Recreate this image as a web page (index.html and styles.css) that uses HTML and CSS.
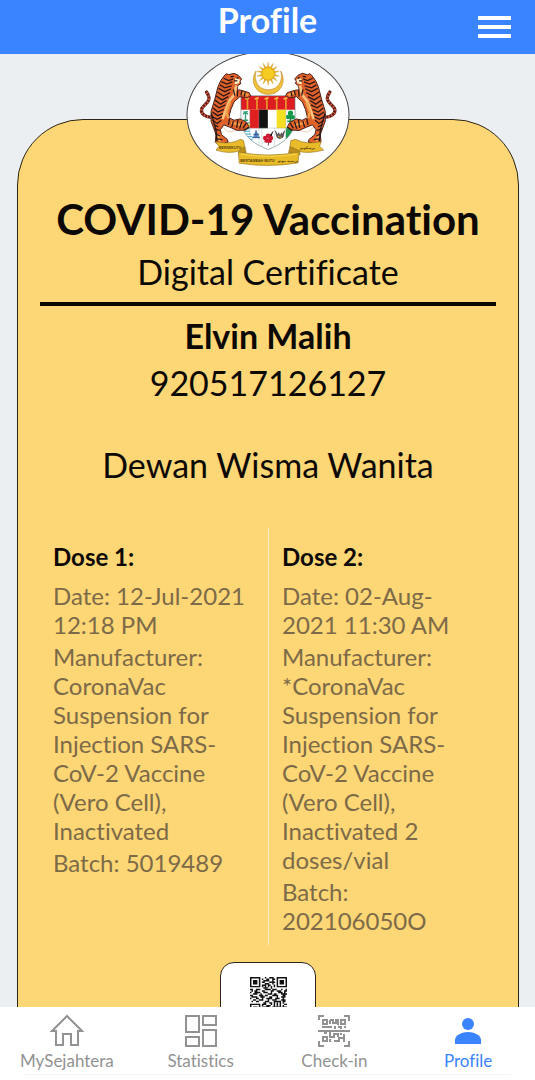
FILE: index.html
```html
<!DOCTYPE html>
<html lang="en">
<head>
<meta charset="utf-8">
<meta name="viewport" content="width=device-width, initial-scale=1">
<title>Profile</title>
<link rel="stylesheet" href="styles.css">
</head>
<body>
<div class="app">
  <header class="topbar">
    <h1 class="topbar-title">Profile</h1>
    <button class="menu" type="button" aria-label="Menu"><span></span><span></span><span></span></button>
  </header>

  <main class="content">
    <article class="card">
      <svg class="seal" viewBox="19 3 489 384" role="img" aria-label="Coat of arms of Malaysia">
        <defs>
          <g id="tiger">
            <path d="M91 201 C74 203 58 191 61 178 C63 167 78 163 83 149 C86 141 80 131 76 125" fill="none" stroke="#64201d" stroke-width="10" stroke-linecap="round"/>
            <path d="M91 201 C74 203 58 191 61 178 C63 167 78 163 83 149 C86 141 80 131 76 125" fill="none" stroke="#d9603a" stroke-width="8" stroke-dasharray="4 6"/>
            <path d="M123 178 Q118 205 124 231 L143 247 L178 240" fill="none" stroke="#d8b58c" stroke-width="2"/>
            <path d="M132 73 Q137 66 144 72 L160 68 L173 74 L183 85 L178 92 L181 99 L171 106 L170 118 L184 120 L206 127 L211 136 L200 143 L178 139 L160 155 L150 179 L144 203 L160 211 L178 207 L198 217 L205 230 L195 241 L170 242 L147 232 L129 225 L118 240 L122 255 L140 270 L142 278 L116 286 L103 278 L105 254 L90 214 L90 184 L101 148 L111 109 L119 91Z" fill="#df622b" stroke="#4b201a" stroke-width="3"/>
            <path d="M167 105 L160 134 L146 151 L134 183 L125 207" fill="none" stroke="#f9c47d" stroke-width="8"/>
            <path d="M148 156 L137 186 L142 205 M183 128 L203 134 M152 219 L185 226 M111 254 L117 276" fill="none" stroke="#f1a14a" stroke-width="7"/>
            <path d="M163 83 L178 87 L175 98 L162 101Z" fill="#fff0c9"/>
            <path d="M128 83 L144 90 L158 85 M121 93 L138 101 L155 94 M117 103 L132 112 L153 106 M113 114 L132 124 L151 115 M109 125 L128 137 L148 127 M105 137 L124 149 L143 139 M101 149 L119 162 L137 151 M99 162 L115 173 L134 164 M96 174 L111 186 L129 178 M94 186 L110 197 L126 190 M92 199 L108 208 L123 201 M94 211 L109 221 L121 211 M98 224 L112 231 M100 237 L116 242 M103 252 L117 259 M108 268 L125 270 M158 117 L162 136 M171 120 L170 139 M184 122 L181 135 M194 126 L191 138 M146 207 L143 225 M158 214 L153 232 M172 210 L168 234 M184 215 L177 237 M197 220 L187 236" fill="none" stroke="#2d1718" stroke-width="4"/>
            <path d="M149 79 L159 77 M168 81 L174 83 M160 91 L170 91 M91 190 L105 241 L108 278" fill="none" stroke="#231716" stroke-width="4"/>
            <path d="M116 286 L141 280 M191 241 L207 232" stroke="#402116" stroke-width="5"/>
          </g>
          <path id="ray" d="M264 34 L270 69 L264 104 L258 69Z"/>
          <clipPath id="shield"><path d="M181 136 H346 V205 C346 254 310 283 264 300 C217 283 181 254 181 205Z"/></clipPath>
        </defs>

        <path d="M227 61 C220 82 228 118 265 118 C300 118 310 83 302 61 C321 92 303 132 265 132 C225 132 207 91 227 61Z" fill="#efc13b" stroke="#c28c2c" stroke-width="2"/>
        <g fill="#eab91b" stroke="#c58a1c" stroke-width="1">
          <use href="#ray"/>
          <use href="#ray" transform="rotate(25.71 264 69)"/>
          <use href="#ray" transform="rotate(51.43 264 69)"/>
          <use href="#ray" transform="rotate(77.14 264 69)"/>
          <use href="#ray" transform="rotate(102.86 264 69)"/>
          <use href="#ray" transform="rotate(128.57 264 69)"/>
          <use href="#ray" transform="rotate(154.29 264 69)"/>
          <circle cx="264" cy="69" r="21"/>
        </g>
        <circle cx="264" cy="69" r="17" fill="#f4cc22"/>

        <g clip-path="url(#shield)">
          <path d="M181 136h165v165H181z" fill="#fff"/>
          <path d="M181 136h165v43H181z" fill="#dc1c20"/>
          <path d="M201 179V146 M230 179V146 M260 179V146 M290 179V146 M318 179V146" stroke="#e89a2b" stroke-width="5"/>
          <path d="M194 146l12-4 M223 146l12-4 M253 146l12-4 M283 146l12-4 M311 146l12-4" stroke="#f5bd44" stroke-width="5"/>
          <path d="M208 179h28v56h-28z" fill="#df2020"/>
          <path d="M236 179h27v56h-27z" fill="#111"/>
          <path d="M290 179h28v56h-28z" fill="#f5df22"/>
          <path d="M183 216h25v19h-25z" fill="#f6dc48"/>
          <path d="M195 212V190 M188 193l7-6 8 6 M188 186l14-1 M189 211h14" fill="none" stroke="#319e75" stroke-width="4"/>
          <path d="M183 219h25 M183 237h25 M185 245h24 M188 253h24 M194 261h22 M202 269h15" stroke="#58b9dd" stroke-width="4"/>
          <path d="M318 235h28v20l-28 21z" fill="#18994e"/>
          <path d="M332 216V195" stroke="#357749" stroke-width="5"/>
          <g fill="#139a49"><circle cx="332" cy="189" r="8"/><circle cx="325" cy="201" r="7"/><circle cx="339" cy="202" r="7"/></g>
          <path d="M322 214h18" stroke="#139a49" stroke-width="4"/>
          <path d="M227 241l-11 24h24z" fill="#6e9bd0"/>
          <path d="M219 254h17 M216 264h23 M227 242v21" stroke="#365697" stroke-width="3"/>
          <path d="M264 289 L268 258 L280 244 M251 278l28-18" stroke="#8b332f" stroke-width="2"/>
          <g fill="#cf1832"><circle cx="264" cy="258" r="7"/><circle cx="255" cy="265" r="7"/><circle cx="272" cy="266" r="7"/><circle cx="260" cy="273" r="7"/><circle cx="270" cy="275" r="5"/></g>
          <path d="M286 243 l6 13 4-7 4 9 5-9 3 5 6-11 -5 20 -10 4 -8-4Z" fill="#66545a" stroke="#3e3e3e" stroke-width="2"/>
          <path d="M293 259l12 5" stroke="#c59a32" stroke-width="3"/>
          <path d="M181 235H346 M208 179V275 M236 179V290 M318 179V277 M245 235V293 M284 235V293" fill="none" stroke="#8b9a9d" stroke-width="1"/>
        </g>
        <path d="M181 136 H346 V205 C346 254 310 283 264 300 C217 283 181 254 181 205Z" fill="none" stroke="#70858a" stroke-width="2"/>

        <use href="#tiger"/>
        <use href="#tiger" transform="translate(528 0) scale(-1 1)"/>

        <g fill="#e9bb28" stroke="#9a7927" stroke-width="2">
          <path d="M103 276 Q146 287 181 269 L189 273 L193 294 L177 304 Q145 315 105 302 L114 291Z"/>
          <path d="M425 276 Q382 287 347 269 L333 273 L330 294 L351 304 Q383 315 433 302 L421 291Z"/>
          <path d="M193 291 L175 304 L174 317 L197 310Z M331 291 L360 304 L361 317 L326 310Z" fill="#b98c1b"/>
          <path d="M173 308 Q265 326 358 308 L355 341 Q265 356 176 342Z"/>
        </g>
        <path d="M181 314Q265 328 350 314" fill="none" stroke="#f7d94c" stroke-width="3"/>
        <g class="motto">
          <text x="114" y="299">BERSEKUTU</text>
          <text x="179" y="338">BERTAMBAH MUTU</text>
          <text class="jawi" x="384" y="298" text-anchor="middle">برسکوتو</text>
          <text class="jawi" x="324" y="338" text-anchor="middle">برتمبه موتو</text>
        </g>
      </svg>

      <div class="heading">
        <h2 class="title">COVID-19 Vaccination</h2>
        <p class="large">Digital Certificate</p>
      </div>
      <section class="person">
        <h3 class="name">Elvin Malih</h3>
        <p class="large">920517126127</p>
      </section>
      <p class="large place">Dewan Wisma Wanita</p>

      <div class="doses">
        <section class="dose">
          <h4 class="dose-title">Dose 1:</h4>
          <p>Date: 12-Jul-2021<br>12:18 PM</p>
          <p>Manufacturer:<br>CoronaVac<br>Suspension for<br>Injection SARS-<br>CoV-2 Vaccine<br>(Vero Cell),<br>Inactivated</p>
          <p>Batch: 5019489</p>
        </section>
        <section class="dose">
          <h4 class="dose-title">Dose 2:</h4>
          <p>Date: 02-Aug-<br>2021 11:30 AM</p>
          <p>Manufacturer:<br>*CoronaVac<br>Suspension for<br>Injection SARS-<br>CoV-2 Vaccine<br>(Vero Cell),<br>Inactivated 2<br>doses/vial</p>
          <p>Batch:<br>202106050O</p>
        </section>
      </div>

      <div class="qr-box">
        <svg class="qr" viewBox="0 0 25 25" role="img" aria-label="QR code">
          <g fill="none" stroke="#111">
            <path d="M.5.5h6v6h-6z M18.5.5h6v6h-6z M.5 18.5h6v6h-6z M16.5 16.5h4v4h-4z"/>
            <path d="M2 3.500h3 M20 3.500h3 M2 21.500h3 M18 18.500h1" stroke-width="3"/>
            <path d="M10 .5h1m2 0h3 M8 1.500h1m2 0h2m2 0h2 M9 2.500h4m2 0h1 M8 3.500h2m3 0h4 M10 4.500h3m2 0h1 M8 5.500h3m1 0h2m2 0h1 M8 6.500h1m1 0h1m1 0h1m1 0h1m1 0h1 M9 7.500h3m2 0h1"/>
            <path d="M0 8.500h2m2 0h3m3 0h4m1 0h3m3 0h1m2 0h1 M1 9.500h1m1 0h2m3 0h2m4 0h2m2 0h3m2 0h2 M0 10.500h1m2 0h4m2 0h3m2 0h1m4 0h3m1 0h1 M2 11.500h3m2 0h1m4 0h3m1 0h2m3 0h4 M0 12.500h2m4 0h3m1 0h2m3 0h4m3 0h2 M1 13.500h4m2 0h3m3 0h2m3 0h1m2 0h3 M0 14.500h1m3 0h2m2 0h1m2 0h4m2 0h3m2 0h1 M2 15.500h2m2 0h3m3 0h1m2 0h3m3 0h3 M1 16.500h1m2 0h2m4 0h3m9 0h2"/>
            <path d="M9 17.500h2m2 0h2m7 0h1 M8 18.500h3m3 0h1m8 0h2 M8 19.500h1m2 0h3m8 0h1 M9 20.500h4m2 0h1m6 0h3 M8 21.500h2m3 0h4m2 0h2m2 0h1 M10 22.500h3m2 0h2m3 0h4 M8 23.500h3m3 0h2m2 0h3 M9 24.500h1m2 0h4m3 0h2m2 0h2"/>
          </g>
        </svg>
      </div>
    </article>
  </main>

  <nav class="tabs" aria-label="Main">
    <a class="tab" href="#home">
      <svg class="icon" viewBox="0 0 34 34" fill="none" stroke="currentColor" stroke-width="2"><path d="M17 2 L2 17 H6 V31 H13 V20 H21 V31 H28 V17 H32Z"/></svg>
      <span>MySejahtera</span>
    </a>
    <a class="tab" href="#statistics">
      <svg class="icon" viewBox="0 0 34 34" fill="none" stroke="currentColor" stroke-width="2"><path d="M2 2h13v16H2z M19 2h13v9H19z M2 23h13v9H2z M19 16h13v16H19z"/></svg>
      <span>Statistics</span>
    </a>
    <a class="tab" href="#checkin">
      <svg class="icon" viewBox="0 0 34 34" fill="none" stroke="currentColor" stroke-width="2"><path d="M2 6V2h5 M27 2h5v5 M2 27v5h5 M27 32h5v-5 M1 17h32"/><path d="M6 6h4v4H6z M24 6h4v4h-4z M6 23h4v4H6z M13 6v4 M13 6h3v3h3V5 M21 5v6 M5 13h10 M18 12v3 M21 13h3v2 M27 13h2 M7 19h3 M13 18v5h4v-3h4v3 M13 25v3 M17 27h5v-3h5v-4 M27 23v5 M24 19v2"/></svg>
      <span>Check-in</span>
    </a>
    <a class="tab active" href="#profile" aria-current="page">
      <svg class="icon" viewBox="0 0 34 34" fill="currentColor"><circle cx="17" cy="10" r="6"/><path d="M4 30v-4c0-5 7-8 13-8s13 3 13 8v4z"/></svg>
      <span>Profile</span>
    </a>
  </nav>
</div>
</body>
</html>
```

FILE: styles.css
```css
* {
  box-sizing: border-box;
}

body,
h1,
h2,
h3,
h4,
p {
  margin: 0;
}

body {
  font-family: Lato, "Open Sans", sans-serif;
  font-variant-ligatures: no-common-ligatures;
  color: #0c0905;
  background: #eceff1;
}

.app {
  display: flex;
  flex-direction: column;
  height: 100vh;
}

.topbar {
  display: grid;
  grid-template-columns: 1fr auto 1fr;
  flex: none;
  height: 54px;
  padding: 0 24px;
  background: #3a84ff;
  color: #fff;
}

.topbar-title {
  grid-column: 2;
  font-size: 34px;
  line-height: 40px;
}

.menu {
  display: flex;
  flex-direction: column;
  justify-self: end;
  align-self: center;
  gap: 5px;
  padding: 0;
  border: 0;
  background: none;
}

.menu span {
  width: 33px;
  height: 4px;
  background: #fff;
}

.content {
  flex: 1;
  min-height: 0;
  overflow: hidden;
  padding: 65px 16px 0 17px;
}

.card {
  position: relative;
  padding: 72px 22px 80px;
  border: 1px solid #2b2417;
  border-radius: 66px 66px 0 0;
  background: #fdd675;
  text-align: center;
}

.seal {
  position: absolute;
  top: -69px;
  left: 50%;
  width: 163px;
  height: 128px;
  transform: translateX(-50%);
  border: 1px solid #444;
  border-radius: 50%;
  background: #fff;
}

.motto {
  font: bold 11px "Liberation Sans", sans-serif;
  fill: #594311;
}

.jawi {
  font-family: "DejaVu Sans", sans-serif;
}

.heading {
  padding-bottom: 4px;
  border-bottom: 4px solid #0c0905;
}

.title {
  font-size: 42px;
  line-height: 54px;
}

.large {
  font-size: 34px;
  line-height: 52px;
}

.name {
  font-size: 34px;
  line-height: 42px;
}

.person {
  padding-top: 9px;
}

.place {
  margin-top: 30px;
}

.doses {
  display: grid;
  grid-template-columns: 1fr 1fr;
  margin-top: 37px;
  text-align: left;
}

.dose {
  display: flex;
  flex-direction: column;
  gap: 3px;
  padding: 12px 0 10px 13px;
  color: #7c6a48;
  font-size: 24px;
  line-height: 29px;
}

.dose + .dose {
  border-left: 1px solid #fdedc4;
}

.dose-title {
  padding: 2px 0 7px;
  color: #0c0905;
  font-size: 24px;
}

.qr-box {
  display: flex;
  justify-content: center;
  width: 96px;
  margin: 17px auto 0;
  padding: 14px 0 40px;
  border: 1px solid #2b2417;
  border-radius: 14px;
  background: #fff;
}

.qr {
  width: 37px;
  height: 37px;
}

.tabs {
  display: flex;
  flex: none;
  height: 73px;
  background: #fff;
}

.tab {
  display: flex;
  flex: 1;
  flex-direction: column;
  align-items: center;
  padding-top: 7px;
  color: #929292;
  font-size: 17px;
  line-height: 26px;
  text-decoration: none;
}

.tab.active {
  color: #3a84ff;
}

.icon {
  width: 34px;
  height: 34px;
}

.tabs::after {
  content: "";
  position: absolute;
  right: 24px;
  bottom: 5px;
  left: 24px;
  height: 1px;
  background: #f3f3f3;
}
```
